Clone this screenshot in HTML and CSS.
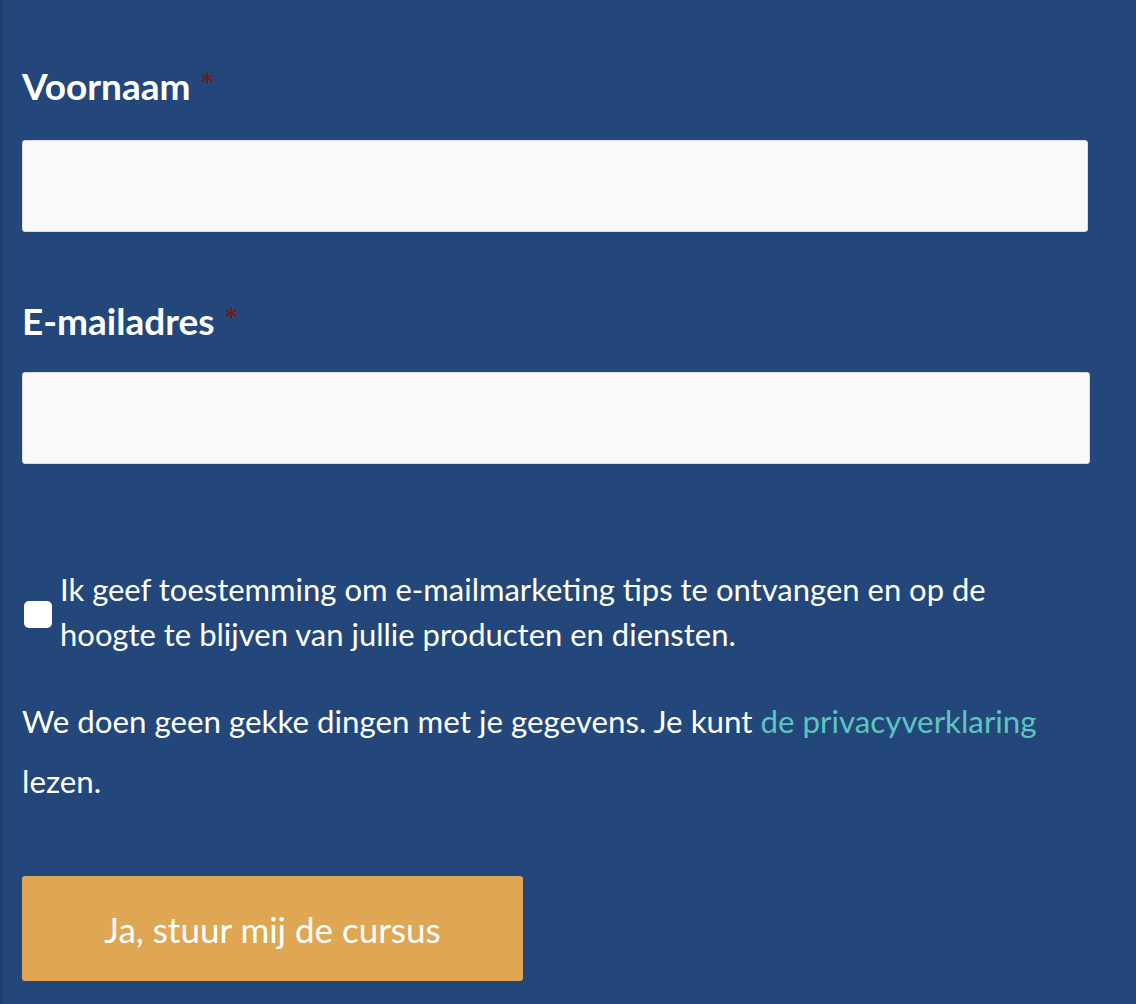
FILE: index.html
```html
<!DOCTYPE html>
<html lang="nl">
<head>
<meta charset="utf-8">
<title>Aanmelden</title>
<link rel="stylesheet" href="styles.css">
</head>
<body>
<form class="signup">
  <div class="field field-first">
    <label class="label">Voornaam <span class="req">*</span></label>
    <input class="input" type="text">
  </div>
  <div class="field field-second">
    <label class="label">E-mailadres <span class="req">*</span></label>
    <input class="input input-wide" type="email">
  </div>
  <div class="consent">
    <span class="box"></span>
    <span class="consent-text">Ik geef toestemming om e-mailmarketing tips te ontvangen en op de hoogte te blijven van jullie producten en diensten.</span>
  </div>
  <p class="privacy">We doen geen gekke dingen met je gegevens. Je kunt <a class="link" href="#">de privacyverklaring</a> lezen.</p>
  <button class="submit" type="button">Ja, stuur mij de cursus</button>
</form>
</body>
</html>
```
FILE: styles.css
```css
html, body {
  margin: 0;
  padding: 0;
  background: #23477a;
}
body {
  font-family: Lato, "Open Sans", sans-serif;
  color: #ffffff;
  min-height: 1004px;
  border-left: 2px solid #1e3f6e;
  box-sizing: border-box;
}
.signup {
  padding: 64px 0 0 20px;
  width: 1068px;
}
.field {
  display: flex;
  flex-direction: column;
}
.field-second {
  margin-top: 67px;
}
.label {
  font-size: 37px;
  font-weight: 700;
  line-height: 44px;
  margin-bottom: 32px;
}
.field-second .label {
  margin-bottom: 29px;
}
.req {
  color: #7a1414;
  font-weight: 400;
}
.input {
  display: block;
  box-sizing: border-box;
  width: 1066px;
  height: 92px;
  margin: 0;
  background: #f9f9f9;
  border: 1px solid #dcdcdc;
  border-radius: 3px;
}
.input-wide {
  width: 1068px;
}
.consent {
  display: flex;
  align-items: flex-start;
  gap: 8px;
  margin-top: 103px;
  padding-left: 2px;
}
.box {
  flex: none;
  width: 28px;
  height: 27px;
  margin-top: 34px;
  background: #ffffff;
  border-radius: 5px;
}
.consent-text {
  font-size: 31px;
  line-height: 45px;
  max-width: 960px;
}
.privacy {
  font-size: 31.3px;
  line-height: 60px;
  margin: 34px 0 0;
}
.link {
  color: #5cc5c0;
  text-decoration: none;
}
.submit {
  display: block;
  margin-top: 65px;
  width: 501px;
  height: 105px;
  background: #dfa753;
  border: none;
  border-radius: 3px;
  color: #ffffff;
  font-family: Lato, "Open Sans", sans-serif;
  font-size: 35px;
  padding: 0;
}
```
